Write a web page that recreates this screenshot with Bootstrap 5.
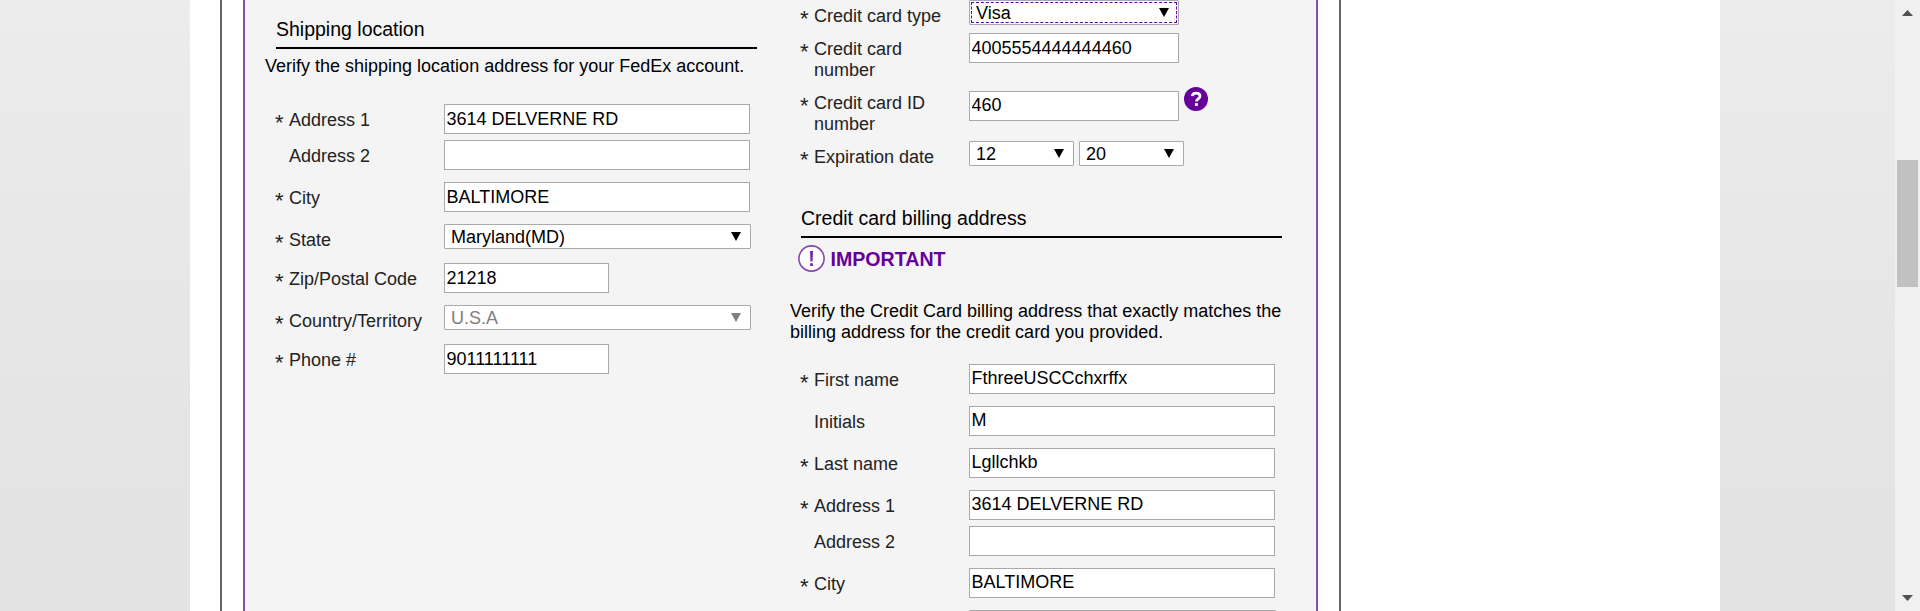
<!DOCTYPE html>
<html lang="en">
<head>
<meta charset="utf-8">
<title>Account registration</title>
<link href="https://cdn.jsdelivr.net/npm/bootstrap@5.3.0/dist/css/bootstrap.min.css" rel="stylesheet">
<style>
body{height:611px;overflow:hidden;font-family:"Liberation Sans",Arial,sans-serif;font-size:18px;line-height:21px;color:#000;background:linear-gradient(#ececec,#e8e8e8 210px,#e4e4e4 460px,#e3e3e3)}
.page{width:1530px;margin-left:190px;padding-left:30px}
.frame{width:1121px;border:solid #666;border-width:0 2px;padding:0 21px}
.panel{border:solid #8a4fae;border-width:0 2px;background:#f4f4f4}
.col-ship{width:525px;padding-left:31px}
.section-title{width:481px;height:34px;padding-top:2px;font-size:19.5px;line-height:24px;border-bottom:2px solid #000}
.section-title.billing{height:37px;padding-top:5px}
.field{display:flex;height:30px;margin-bottom:12px}
.field.close-next{margin-bottom:6px}
.pick{height:25px;margin-bottom:14px}
.lbl{position:relative;width:168px;padding:6px 20px 0 13px;color:#222;flex:none}
.req::before{content:"*";position:absolute;left:-1px;top:8px;font-size:22px;color:#222}
.form-control,.form-select{font-family:inherit;font-size:18px;line-height:21px;color:#000;background-color:#fff;border:1px solid #a9a9a9;border-radius:0;height:30px;width:306px;padding:0 1.5px}
.form-select{height:25px;width:307px;padding:2px 0 0 6px;border-radius:1px;background-position:right 9px top 7px;background-size:10px 9px;background-image:url("data:image/svg+xml,%3Csvg xmlns='http://www.w3.org/2000/svg' viewBox='0 0 10 9' preserveAspectRatio='none'%3E%3Cpath d='M0 0h10L5 9z'/%3E%3C/svg%3E")}
.form-select:disabled{color:#808080;background-color:#fff;opacity:1;background-image:url("data:image/svg+xml,%3Csvg xmlns='http://www.w3.org/2000/svg' viewBox='0 0 10 9' preserveAspectRatio='none'%3E%3Cpath fill='%23808080' d='M0 0h10L5 9z'/%3E%3C/svg%3E")}
.short{width:165px}.mid{width:210px}.small-pick{width:105px;margin-right:5px}
.form-select.selected{outline:1px dashed #609;outline-offset:-3px}
.raised{padding-bottom:2px}
.important{margin-left:-3px;height:27px;margin-top:7px;color:#609;font-size:19.6px;font-weight:700}
.scroll{width:25px;background:#f0f0f0;margin-left:175px}
.thumb{width:21px;height:127px;background:#c1c1c1;margin:144px auto 0}
</style>
</head>
<body class="d-flex align-items-stretch">
<main class="page bg-white d-flex flex-shrink-0">
 <div class="frame bg-white">
  <div class="panel d-flex h-100">
   <section class="col-ship flex-shrink-0">
    <h2 class="section-title mb-0 fw-normal" style="margin-top:15px">Shipping location</h2>
    <p class="text-nowrap" style="margin:7px 0 27px -11px">Verify the shipping location address for your FedEx account.</p>
    <div class="field close-next"><label class="lbl req">Address 1</label><input class="form-control" value="3614 DELVERNE RD"></div>
    <div class="field"><label class="lbl">Address 2</label><input class="form-control"></div>
    <div class="field"><label class="lbl req">City</label><input class="form-control" value="BALTIMORE"></div>
    <div class="field pick"><label class="lbl req">State</label><select class="form-select"><option>Maryland(MD)</option></select></div>
    <div class="field"><label class="lbl req text-nowrap">Zip/Postal Code</label><input class="form-control short" value="21218"></div>
    <div class="field pick"><label class="lbl req text-nowrap">Country/Territory</label><select class="form-select" disabled><option>U.S.A</option></select></div>
    <div class="field"><label class="lbl req">Phone #</label><input class="form-control short" value="9011111111"></div>
   </section>
   <section class="pe-3" style="padding-left:31px">
    <div class="field pick" style="margin-bottom:8px"><label class="lbl req text-nowrap">Credit card type</label><select class="form-select mid selected"><option>Visa</option></select></div>
    <div class="field" style="margin-bottom:28px"><label class="lbl req">Credit card number</label><input class="form-control mid" value="4005554444444460"></div>
    <div class="field" style="margin-bottom:20px"><label class="lbl req" style="margin-top:-4px">Credit card ID number</label><input class="form-control mid raised" value="460">
     <svg class="flex-shrink-0" width="25" height="25" viewBox="0 0 25 25" style="margin:-4px 0 0 4px"><circle cx="13" cy="12" r="12" fill="#609"/><path d="M9.3 9.2c.2-2 1.7-3 3.8-3 2.3 0 3.9 1.1 3.9 3 0 2.8-3.5 2.6-3.5 5.3" fill="none" stroke="#fff" stroke-width="2.8"/><path d="M11.9 16.2h3v2.7h-3z" fill="#fff"/></svg>
    </div>
    <div class="field pick" style="margin-bottom:35px"><label class="lbl req">Expiration date</label><select class="form-select small-pick"><option>12</option></select><select class="form-select small-pick"><option>20</option></select></div>
    <h2 class="section-title billing mb-0 fw-normal">Credit card billing address</h2>
    <div class="important d-flex align-items-center">
     <svg width="27" height="27" viewBox="0 0 27 27"><circle cx="13.5" cy="13.5" r="12.6" fill="#fff" stroke="#8a45b2" stroke-width="1.6"/><path d="M12 6h3l-.4 10.5h-2.2zM12.1 18.3h2.8V21h-2.8z" fill="#7a2aa8"/></svg>
     <span style="margin-left:5.5px;padding-top:1px">IMPORTANT</span>
    </div>
    <p style="margin:29px 0 21px -11px;width:510px">Verify the Credit Card billing address that exactly matches the<br>billing address for the credit card you provided.</p>
    <div class="field"><label class="lbl req">First name</label><input class="form-control raised" value="FthreeUSCCchxrffx"></div>
    <div class="field"><label class="lbl">Initials</label><input class="form-control raised" value="M"></div>
    <div class="field"><label class="lbl req">Last name</label><input class="form-control raised" value="Lgllchkb"></div>
    <div class="field close-next"><label class="lbl req">Address 1</label><input class="form-control raised" value="3614 DELVERNE RD"></div>
    <div class="field"><label class="lbl">Address 2</label><input class="form-control"></div>
    <div class="field"><label class="lbl req">City</label><input class="form-control raised" value="BALTIMORE"></div>
    <div class="field pick"><span class="lbl"></span><select class="form-select" aria-label="State"></select></div>
   </section>
  </div>
 </div>
</main>
<aside class="scroll d-flex flex-column flex-shrink-0">
 <svg width="11" height="6" style="margin:10px 0 0 7px" viewBox="0 0 11 6"><path d="M0 6h11L5.5 0z" fill="#505050"/></svg>
 <div class="thumb"></div>
 <svg class="mt-auto" width="11" height="6" style="margin:0 0 10px 7px" viewBox="0 0 11 6"><path d="M0 0h11L5.5 6z" fill="#505050"/></svg>
</aside>
<script src="https://cdn.jsdelivr.net/npm/bootstrap@5.3.0/dist/js/bootstrap.bundle.min.js"></script>
</body>
</html>
